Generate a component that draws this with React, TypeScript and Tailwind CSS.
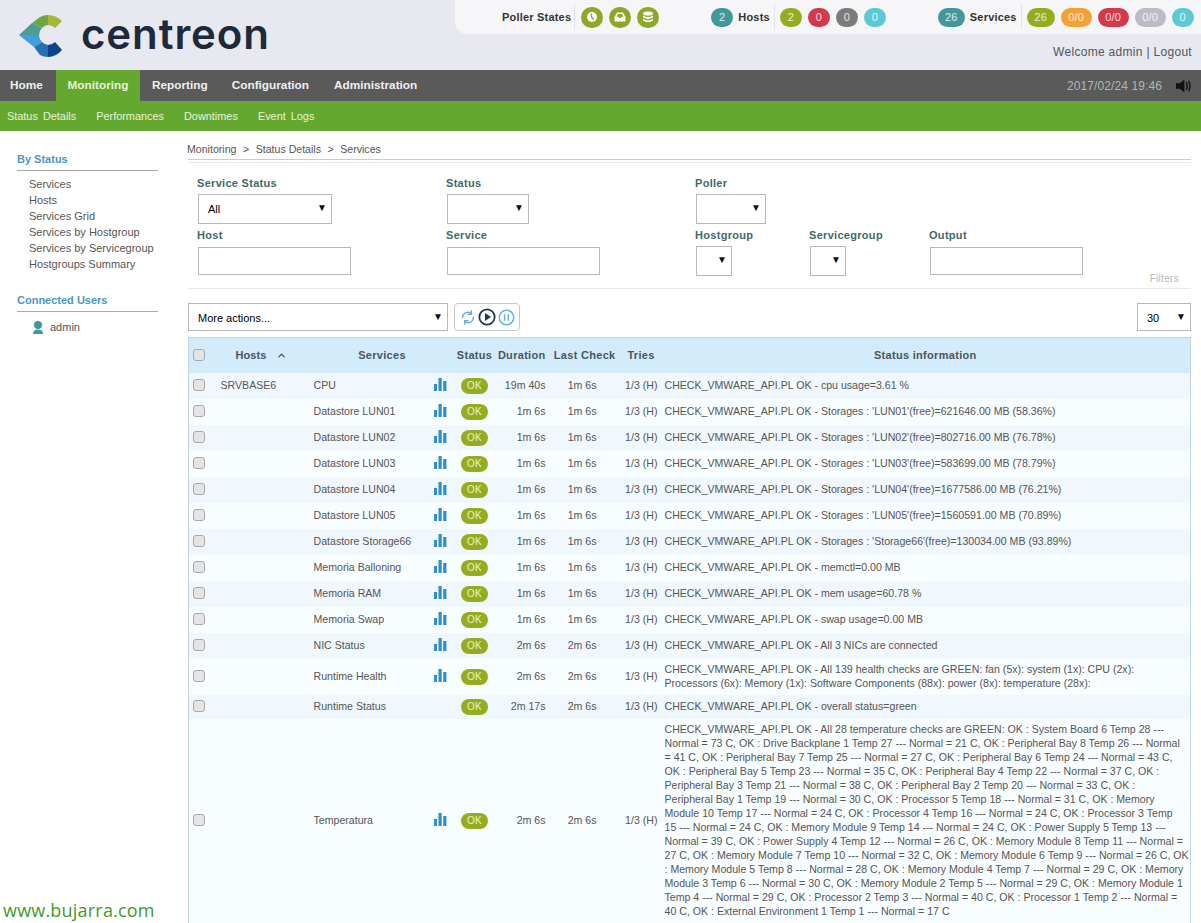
import { ChevronUp } from "lucide-react";

const font = "font-['Liberation_Sans',Arial,sans-serif]";

const rows = [
  { host: "SRVBASE6", service: "CPU", duration: "19m 40s", last: "1m 6s", info: ["CHECK_VMWARE_API.PL OK - cpu usage=3.61 %"] },
  { service: "Datastore LUN01", duration: "1m 6s", last: "1m 6s", info: ["CHECK_VMWARE_API.PL OK - Storages : 'LUN01'(free)=621646.00 MB (58.36%)"] },
  { service: "Datastore LUN02", duration: "1m 6s", last: "1m 6s", info: ["CHECK_VMWARE_API.PL OK - Storages : 'LUN02'(free)=802716.00 MB (76.78%)"] },
  { service: "Datastore LUN03", duration: "1m 6s", last: "1m 6s", info: ["CHECK_VMWARE_API.PL OK - Storages : 'LUN03'(free)=583699.00 MB (78.79%)"] },
  { service: "Datastore LUN04", duration: "1m 6s", last: "1m 6s", info: ["CHECK_VMWARE_API.PL OK - Storages : 'LUN04'(free)=1677586.00 MB (76.21%)"] },
  { service: "Datastore LUN05", duration: "1m 6s", last: "1m 6s", info: ["CHECK_VMWARE_API.PL OK - Storages : 'LUN05'(free)=1560591.00 MB (70.89%)"] },
  { service: "Datastore Storage66", duration: "1m 6s", last: "1m 6s", info: ["CHECK_VMWARE_API.PL OK - Storages : 'Storage66'(free)=130034.00 MB (93.89%)"] },
  { service: "Memoria Balloning", duration: "1m 6s", last: "1m 6s", info: ["CHECK_VMWARE_API.PL OK - memctl=0.00 MB"] },
  { service: "Memoria RAM", duration: "1m 6s", last: "1m 6s", info: ["CHECK_VMWARE_API.PL OK - mem usage=60.78 %"] },
  { service: "Memoria Swap", duration: "1m 6s", last: "1m 6s", info: ["CHECK_VMWARE_API.PL OK - swap usage=0.00 MB"] },
  { service: "NIC Status", duration: "2m 6s", last: "2m 6s", info: ["CHECK_VMWARE_API.PL OK - All 3 NICs are connected"] },
  {
    service: "Runtime Health", duration: "2m 6s", last: "2m 6s", h: "h-[36px]",
    info: [
      "CHECK_VMWARE_API.PL OK - All 139 health checks are GREEN: fan (5x): system (1x): CPU (2x):",
      "Processors (6x): Memory (1x): Software Components (88x): power (8x): temperature (28x):",
    ],
  },
  { service: "Runtime Status", duration: "2m 17s", last: "2m 6s", noGraph: true, h: "h-[24px]", info: ["CHECK_VMWARE_API.PL OK - overall status=green"] },
  {
    service: "Temperatura", duration: "2m 6s", last: "2m 6s", h: "h-[204px]",
    info: [
      "CHECK_VMWARE_API.PL OK - All 28 temperature checks are GREEN: OK : System Board 6 Temp 28 ---",
      "Normal = 73 C, OK : Drive Backplane 1 Temp 27 --- Normal = 21 C, OK : Peripheral Bay 8 Temp 26 --- Normal",
      "= 41 C, OK : Peripheral Bay 7 Temp 25 --- Normal = 27 C, OK : Peripheral Bay 6 Temp 24 --- Normal = 43 C,",
      "OK : Peripheral Bay 5 Temp 23 --- Normal = 35 C, OK : Peripheral Bay 4 Temp 22 --- Normal = 37 C, OK :",
      "Peripheral Bay 3 Temp 21 --- Normal = 38 C, OK : Peripheral Bay 2 Temp 20 --- Normal = 33 C, OK :",
      "Peripheral Bay 1 Temp 19 --- Normal = 30 C, OK : Processor 5 Temp 18 --- Normal = 31 C, OK : Memory",
      "Module 10 Temp 17 --- Normal = 24 C, OK : Processor 4 Temp 16 --- Normal = 24 C, OK : Processor 3 Temp",
      "15 --- Normal = 24 C, OK : Memory Module 9 Temp 14 --- Normal = 24 C, OK : Power Supply 5 Temp 13 ---",
      "Normal = 39 C, OK : Power Supply 4 Temp 12 --- Normal = 26 C, OK : Memory Module 8 Temp 11 --- Normal =",
      "27 C, OK : Memory Module 7 Temp 10 --- Normal = 32 C, OK : Memory Module 6 Temp 9 --- Normal = 26 C, OK",
      ": Memory Module 5 Temp 8 --- Normal = 28 C, OK : Memory Module 4 Temp 7 --- Normal = 29 C, OK : Memory",
      "Module 3 Temp 6 --- Normal = 30 C, OK : Memory Module 2 Temp 5 --- Normal = 29 C, OK : Memory Module 1",
      "Temp 4 --- Normal = 29 C, OK : Processor 2 Temp 3 --- Normal = 40 C, OK : Processor 1 Temp 2 --- Normal =",
      "40 C, OK : External Environment 1 Temp 1 --- Normal = 17 C",
    ],
  },
];

const Logo = () => (
  <svg width="46" height="44" viewBox="0 0 46 44" className="mt-[14px] ml-[18px] shrink-0">
    <path d="M30 1 Q38 1 44 7 L37 14 Q34 11 30 11 Z" fill="#a3b73b" />
    <path d="M30 1 Q26 1 22 3 L14 9 L24 14 Q27 11 30 11 Z" fill="#6fa544" />
    <path d="M1 21 L14 9 L24 14 Q21 17 21 21 Z" fill="#4f9c94" />
    <path d="M1 21 L21 21 Q21 25 24 28 L16 33 Z" fill="#3fa0dc" />
    <path d="M16 33 L24 28 Q27 31 30 31 L30 43 Q26 43 22 41 Z" fill="#2272b4" />
    <path d="M30 31 Q34 31 37 28 L44 36 Q38 43 30 43 Z" fill="#0d4489" />
  </svg>
);

const Pill = ({ color, text, w = "w-[22px]" }: { color: string; text: string; w?: string }) => (
  <span className={`${color} ${w} h-[19px] rounded-full flex items-center justify-center text-[11px] font-normal text-white/80`}>{text}</span>
);

const PollerIcon = ({ kind }: { kind: "clock" | "inbox" | "db" }) => (
  <span className="w-[22px] h-[21px] rounded-full bg-[#8fa726] flex items-center justify-center">
    <svg width="12" height="12" viewBox="0 0 12 12">
      {kind === "clock" && (
        <>
          <circle cx="6" cy="6" r="5" fill="#fff" />
          <path d="M5.5 2.5 L5.5 6.3 L8 8.5" stroke="#8fa726" strokeWidth="1.3" fill="none" />
        </>
      )}
      {kind === "inbox" && (
        <>
          <path d="M3 1.5 H9 L11.5 6 V10.5 H0.5 V6 Z" fill="#fff" />
          <path d="M2.5 5.8 H4.5 L5 7 H7 L7.5 5.8 H9.5 L8 3 H4 Z" fill="#8fa726" />
        </>
      )}
      {kind === "db" && (
        <>
          <ellipse cx="6" cy="2.6" rx="5" ry="2" fill="#fff" />
          <path d="M1 4.4 Q6 7.4 11 4.4 V6.6 Q6 9.2 1 6.6 Z" fill="#fff" />
          <path d="M1 8 Q6 10.8 11 8 V9.6 Q6 12.6 1 9.6 Z" fill="#fff" />
        </>
      )}
    </svg>
  </span>
);

const Select = ({ className, text = "" }: { className: string; text?: string }) => (
  <div className={`${className} border border-[#b8b8b8] bg-white flex items-center justify-between pl-[9px] pr-[4px] text-[11px] text-black`}>
    <span>{text}</span>
    <span className="text-[10px] leading-none text-[#111] -mt-[2px]">▼</span>
  </div>
);

const Label = ({ children }: { children: string }) => (
  <div className="text-[11px] font-bold text-[#3f6a69] h-[14px] leading-[14px] tracking-[0.3px]">{children}</div>
);

const TextInput = () => (
  <div className="w-[153px] h-[28px] mt-[5px] ml-[1px] border border-[#b8b8b8] bg-white" />
);

const Check = () => (
  <span className="block w-[12px] h-[12px] rounded-[3px] border border-[#a9a9a9] bg-[#e4e4e4]" />
);

const GraphIcon = () => (
  <svg width="13" height="13" viewBox="0 0 13 13" className="mx-auto">
    <rect x="0" y="6" width="3" height="7" fill="#2e8fc9" />
    <rect x="4.5" y="0" width="3.2" height="13" fill="#2e8fc9" />
    <rect x="9.2" y="3" width="3.2" height="10" fill="#2e8fc9" />
  </svg>
);

export default function App() {
  return (
    <div className={`${font} w-[1201px] h-[923px] overflow-hidden bg-white text-[#555] relative`}>
      {/* Top header */}
      <header className="h-[70px] bg-[#e7e8f0] flex justify-between">
        <div className="flex items-start">
          <Logo />
          <span className="font-['Inter',sans-serif] font-semibold text-[42px] leading-none tracking-[0.9px] text-[#1e2a3c] ml-[17px] mt-[13px]">centreon</span>
        </div>
        <div className="w-[746px] flex flex-col">
          <div className="h-[34px] bg-[#f6f6f8] rounded-bl-[12px] flex items-center text-[11px] font-bold text-[#333] tracking-[0.2px]">
            <span className="ml-[47px]">Poller States</span>
            <span className="w-px h-[26px] bg-[#e4e4e8] ml-[3px] mr-[6px]" />
            <div className="flex gap-[6px]">
              <PollerIcon kind="clock" />
              <PollerIcon kind="inbox" />
              <PollerIcon kind="db" />
            </div>
            <span className="ml-[52px] mr-[5px]"><Pill color="bg-[#41989a]" text="2" /></span>
            <span>Hosts</span>
            <span className="w-px h-[26px] bg-[#e4e4e8] ml-[4px] mr-[5px]" />
            <div className="flex gap-[6px]">
              <Pill color="bg-[#94ad1f]" text="2" />
              <Pill color="bg-[#d2394a]" text="0" />
              <Pill color="bg-[#7b7b7b]" text="0" />
              <Pill color="bg-[#5cc9d3]" text="0" />
            </div>
            <span className="ml-[52px] mr-[5px]"><Pill color="bg-[#41989a]" text="26" w="w-[27px]" /></span>
            <span>Services</span>
            <span className="w-px h-[26px] bg-[#e4e4e8] ml-[4px] mr-[5px]" />
            <div className="flex gap-[6px]">
              <Pill color="bg-[#94ad1f]" text="26" w="w-[28px]" />
              <Pill color="bg-[#f4a035]" text="0/0" w="w-[31px]" />
              <Pill color="bg-[#d2394a]" text="0/0" w="w-[31px]" />
              <Pill color="bg-[#bcbcc6]" text="0/0" w="w-[31px]" />
              <Pill color="bg-[#5cc9d3]" text="0" />
            </div>
          </div>
          <div className="text-right text-[12px] text-[#555] pr-[9px] mt-[11px] leading-[14px] tracking-[0.3px]">Welcome admin | Logout</div>
        </div>
      </header>

      {/* Main menu */}
      <nav className="h-[31px] bg-[#5a5a5a] flex items-center text-[11.8px] font-bold text-[#eef0f0]">
        <span className="w-[56px] pl-[10px] leading-[31px]">Home</span>
        <span className="w-[84px] text-center bg-[#65a82f] leading-[31px] text-[#e5f3d4]">Monitoring</span>
        <span className="pl-[12px] pr-[24px]">Reporting</span>
        <span className="pr-[25px]">Configuration</span>
        <span>Administration</span>
        <span className="ml-auto font-normal text-[#b5b5b5] text-[12px] tracking-[0.1px]">2017/02/24 19:46</span>
        <svg width="16" height="16" viewBox="0 0 17 16" className="ml-[13px] mr-[10px]">
          <path d="M1 5 H5 L10 1 V15 L5 11 H1 Z" fill="#111" />
          <path d="M12 4 Q14 8 12 12 M14.5 2.5 Q17.5 8 14.5 13.5" stroke="#111" strokeWidth="1.5" fill="none" />
        </svg>
      </nav>

      {/* Sub menu */}
      <nav className="h-[30px] bg-[#65a82f] flex items-center text-[10.9px] text-[#e8f2dc] pl-[7px] gap-[20px] [word-spacing:2px]">
        <span>Status Details</span>
        <span>Performances</span>
        <span>Downtimes</span>
        <span>Event Logs</span>
      </nav>

      <div className="flex">
        {/* Side menu */}
        <aside className="w-[188px] shrink-0 pl-[17px] pr-[30px] pt-[21px] text-[11px]">
          <div className="font-bold text-[#4a97c2] leading-[14px] pb-[4px] border-b border-[#aaa]">By Status</div>
          <ul className="pl-[12px] pt-[5px] leading-[16px] text-[#555]">
            <li>Services</li>
            <li>Hosts</li>
            <li>Services Grid</li>
            <li>Services by Hostgroup</li>
            <li>Services by Servicegroup</li>
            <li>Hostgroups Summary</li>
          </ul>
          <div className="font-bold text-[#4a97c2] leading-[14px] pb-[4px] border-b border-[#aaa] mt-[21px]">Connected Users</div>
          <div className="flex items-center gap-[7px] pl-[16px] pt-[8px] leading-[14px]">
            <svg width="10" height="13" viewBox="0 0 10 13">
              <circle cx="5" cy="4" r="4" fill="#41989a" />
              <path d="M0 13 Q0 8.5 5 8.5 Q10 8.5 10 13 Z" fill="#41989a" />
            </svg>
            <span>admin</span>
          </div>
        </aside>

        {/* Content */}
        <main className="w-[1003px] shrink-0">
          <div className="text-[10.6px] text-[#555] leading-[14px] pt-[11px] pb-[3px] border-b border-[#ccc] flex gap-[6.5px]">
            <span className="-ml-px">Monitoring</span>
            <span>&gt;</span>
            <span>Status Details</span>
            <span>&gt;</span>
            <span>Services</span>
          </div>
          <div className="border-b border-[#e8e8e8] h-[3px]" />

          {/* Filters */}
          <div className="border-b border-[#e6e6e6] h-[126px] relative pt-[13px]">
            <div className="flex">
              <div className="w-[249px] pl-[9px]"><Label>Service Status</Label><Select className="w-[134px] h-[30px] mt-[4px] ml-[1px]" text="All" /></div>
              <div className="w-[249px] pl-[9px]"><Label>Status</Label><Select className="w-[82px] h-[30px] mt-[4px] ml-[1px]" /></div>
              <div className="pl-[9px]"><Label>Poller</Label><Select className="w-[70px] h-[30px] mt-[4px] ml-[1px]" /></div>
            </div>
            <div className="flex mt-[4px]">
              <div className="w-[249px] pl-[9px]"><Label>Host</Label><TextInput /></div>
              <div className="w-[249px] pl-[9px]"><Label>Service</Label><TextInput /></div>
              <div className="w-[114px] pl-[9px]"><Label>Hostgroup</Label><Select className="w-[36px] h-[30px] mt-[4px] ml-[1px]" /></div>
              <div className="w-[120px] pl-[9px]"><Label>Servicegroup</Label><Select className="w-[36px] h-[30px] mt-[4px] ml-[1px]" /></div>
              <div className="pl-[9px]"><Label>Output</Label><TextInput /></div>
            </div>
            <span className="absolute right-[12px] bottom-[3px] text-[10px] text-[#b5b5b5] leading-[12px] tracking-[0.3px]">Filters</span>
          </div>

          {/* Toolbar */}
          <div className="flex items-center h-[28px] mt-[14px]">
            <Select className="w-[260px] h-[28px] pt-[2px]" text="More actions..." />
            <div className="ml-[6px] w-[66px] h-[28px] border border-[#c8c8c8] rounded-[4px] flex items-center justify-center gap-[2px]">
              <svg width="16" height="17" viewBox="0 0 24 24" fill="none" stroke="#6cb0d8" strokeWidth="2.2">
                <path d="M4 13 A8 8 0 0 1 17 6 M20 11 A8 8 0 0 1 7 18" />
                <path d="M17 1 V7 H11" /><path d="M7 23 V17 H13" />
              </svg>
              <svg width="18" height="18" viewBox="0 0 18 18">
                <circle cx="9" cy="9" r="7.7" fill="none" stroke="#1f3a52" strokeWidth="1.8" />
                <path d="M7 5 L13 9 L7 13 Z" fill="#1f3a52" />
              </svg>
              <svg width="17" height="17" viewBox="0 0 18 18">
                <circle cx="9" cy="9" r="7.7" fill="none" stroke="#6cb0d8" strokeWidth="1.6" />
                <path d="M7 5.5 V12.5 M11 5.5 V12.5" stroke="#6cb0d8" strokeWidth="1.6" />
              </svg>
            </div>
            <Select className="w-[54px] h-[28px] ml-auto pt-[2px]" text="30" />
          </div>

          {/* Services table */}
          <table className="w-[1003px] mt-[6px] table-fixed border-collapse border-x border-t border-[#bdd4e4] text-[10.6px]">
            <colgroup>
              <col className="w-[22px]" />
              <col className="w-[103px]" />
              <col className="w-[115px]" />
              <col className="w-[24px]" />
              <col className="w-[44px]" />
              <col className="w-[51px]" />
              <col className="w-[74px]" />
              <col className="w-[39px]" />
              <col />
            </colgroup>
            <thead>
              <tr className="h-[35px] bg-[#d3ecfb] text-[11px] text-[#4b5560] tracking-[0.3px]">
                <th className="pl-[4px]"><Check /></th>
                <th className="text-left pl-[25px] font-bold tracking-[0.1px]">
                  <span className="inline-flex items-center gap-[9px]">Hosts <ChevronUp size={11} strokeWidth={3} /></span>
                </th>
                <th className="font-bold pl-[22px]">Services</th>
                <th />
                <th className="font-bold whitespace-nowrap">Status</th>
                <th className="font-bold whitespace-nowrap text-right pr-[2px]">Duration</th>
                <th className="font-bold whitespace-nowrap text-right pr-[6px]">Last Check</th>
                <th className="font-bold whitespace-nowrap">Tries</th>
                <th className="font-bold">Status information</th>
              </tr>
            </thead>
            <tbody>
              {rows.map((r, i) => (
                <tr key={r.service} className={`${r.h ?? "h-[26px]"} ${i === rows.length - 1 ? "bg-[#f8fdff]" : i % 2 === 0 ? "bg-[#f0f8fd]" : "bg-[#f8fdff]"}`}>
                  <td className="pl-[4px] pb-[2px]"><Check /></td>
                  <td className="pl-[10px]">{r.host}</td>
                  <td>{r.service}</td>
                  <td className="px-0 pb-[2px]">{!r.noGraph && <GraphIcon />}</td>
                  <td className="text-center">
                    <span className="inline-flex w-[27px] h-[16px] rounded-full bg-[#94ad1f] text-white/80 text-[10px] items-center justify-center align-middle tracking-[0.3px]">OK</span>
                  </td>
                  <td className="text-right whitespace-nowrap pr-[2px]">{r.duration}</td>
                  <td className="text-right whitespace-nowrap pr-[25px]">{r.last}</td>
                  <td className="text-right whitespace-nowrap pr-[3px]">1/3 (H)</td>
                  <td className="pl-[4px] leading-[14px] pb-[2px]">
                    {r.info.map((line) => (
                      <div key={line} className="whitespace-nowrap">{line}</div>
                    ))}
                  </td>
                </tr>
              ))}
            </tbody>
          </table>
        </main>
      </div>

      {/* Watermark */}
      <span className="absolute left-[3px] bottom-[2px] font-['Open_Sans',sans-serif] text-[18px] leading-[22px] font-medium text-[#3f9a2a] tracking-[0.2px]">www.bujarra.com</span>
    </div>
  );
}
